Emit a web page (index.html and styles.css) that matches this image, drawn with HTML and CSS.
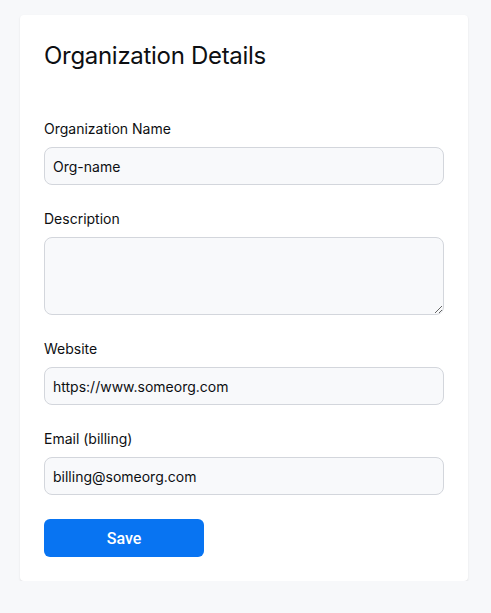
FILE: index.html
```html
<!DOCTYPE html>
<html>
<head>
<meta charset="utf-8">
<link rel="stylesheet" href="styles.css">
</head>
<body>
<div class="card">
  <h1 class="title">Organization Details</h1>
  <form class="form">
    <div class="field">
      <label class="label">Organization Name</label>
      <input class="input" type="text" value="Org-name">
    </div>
    <div class="field">
      <label class="label">Description</label>
      <textarea class="input textarea"></textarea>
    </div>
    <div class="field">
      <label class="label">Website</label>
      <input class="input" type="text" value="https://www.someorg.com">
    </div>
    <div class="field">
      <label class="label">Email (billing)</label>
      <input class="input" type="text" value="billing@someorg.com">
    </div>
    <button class="btn" type="button">Save</button>
  </form>
</div>
</body>
</html>
```

FILE: styles.css
```css
* { box-sizing: border-box; }
html, body { margin: 0; padding: 0; }
body {
  background: #f7f8fa;
  font-family: Inter, "Noto Sans", sans-serif;
  color: #0d0f12;
  padding: 15px 23px 0 20px;
}
.card {
  width: 448px;
  background: #fff;
  border-radius: 4px;
  box-shadow: 0 1px 2px rgba(0,0,0,0.10);
  padding: 25px 24px 24px 24px;
}
.title {
  margin: 0 0 47px 0;
  font-size: 24px;
  line-height: 32px;
  font-weight: 400;
  letter-spacing: -0.3px;
}
.form {
  display: flex;
  flex-direction: column;
  gap: 24px;
}
.field {
  display: flex;
  flex-direction: column;
  gap: 8px;
}
.label {
  display: block;
  font-size: 14px;
  line-height: 20px;
  height: 20px;
  color: #0d0f12;
}
.input {
  display: block;
  width: 400px;
  height: 38px;
  border: 1px solid #d3d6dc;
  border-radius: 8px;
  background: #f8f9fb;
  padding: 0 8px;
  font-family: Inter, "Noto Sans", sans-serif;
  font-size: 14px;
  color: #0d0f12;
  outline: none;
  margin: 0;
}
.textarea {
  height: 78px;
  resize: vertical;
  padding: 8px;
}
.btn {
  display: block;
  width: 160px;
  height: 38px;
  border: none;
  border-radius: 6px;
  background: #0874f2;
  color: #fff;
  font-family: Roboto, "Liberation Sans", Arial, sans-serif;
  font-size: 16px;
  font-weight: 500;
  margin: 0;
}
```
